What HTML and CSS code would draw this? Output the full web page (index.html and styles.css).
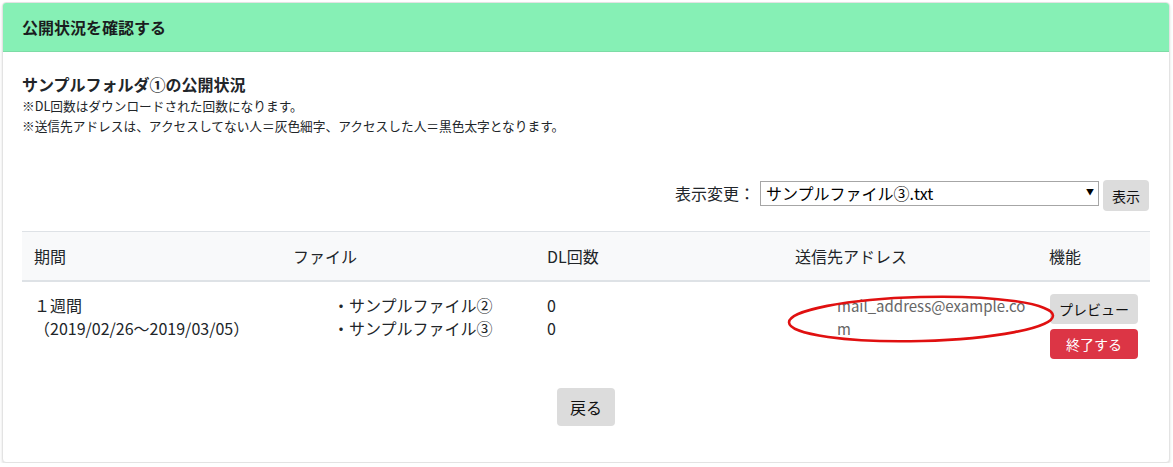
FILE: index.html
```html
<!DOCTYPE html>
<html lang="ja">
<head>
<meta charset="utf-8">
<title>公開状況を確認する</title>
<link rel="stylesheet" href="styles.css">
</head>
<body>
<div class="card">
  <div class="card-header">公開状況を確認する</div>
  <div class="card-body">
    <h2 class="folder-title">サンプルフォルダ①の公開状況</h2>
    <p class="note">※DL回数はダウンロードされた回数になります。</p>
    <p class="note">※送信先アドレスは、アクセスしてない人＝灰色細字、アクセスした人＝黒色太字となります。</p>

    <div class="filter-row">
      <span class="filter-label">表示変更：</span>
      <div class="select-wrap">
        <select class="file-select">
          <option>サンプルファイル③.txt</option>
        </select>
        <span class="select-arrow">▼</span>
      </div>
      <button class="btn btn-gray btn-sm">表示</button>
    </div>

    <table class="status-table">
      <colgroup>
        <col class="c1"><col class="c2"><col class="c3"><col class="c4"><col class="c5">
      </colgroup>
      <thead>
        <tr><th>期間</th><th>ファイル</th><th>DL回数</th><th>送信先アドレス</th><th>機能</th></tr>
      </thead>
      <tbody>
        <tr>
          <td>１週間<br>（2019/02/26〜2019/03/05）</td>
          <td>
            <ul class="file-list">
              <li>・サンプルファイル②</li>
              <li>・サンプルファイル③</li>
            </ul>
          </td>
          <td>0<br>0</td>
          <td class="addr-cell">
            <ul class="addr-list">
              <li class="addr">mail_address@example.com</li>
            </ul>
            <svg class="circle-mark" width="272" height="52" viewBox="0 0 272 52">
              <ellipse cx="136" cy="25" rx="132" ry="22" fill="none" stroke="#e01010" stroke-width="2.6" transform="rotate(-1.5 136 25)"/>
            </svg>
          </td>
          <td>
            <div class="actions">
              <button class="btn btn-gray btn-sm">プレビュー</button>
              <button class="btn btn-red btn-sm">終了する</button>
            </div>
          </td>
        </tr>
      </tbody>
    </table>

    <div class="back-row">
      <button class="btn btn-gray btn-back">戻る</button>
    </div>
  </div>
</div>
</body>
</html>
```

FILE: styles.css
```css
html, body {
  margin: 0;
  padding: 0;
  background: #fff;
}
body {
  padding: 2px 4px 0 2px;
  font-family: "Noto Sans CJK JP", "Noto Sans", sans-serif;
  color: #212529;
  font-size: 16px;
}
.card {
  width: 1166px;
  border: 1px solid #e3e3e3;
  border-radius: 4px;
  box-shadow: 0 2px 3px rgba(0,0,0,0.12);
  overflow: visible;
  background: #fff;
}
.card-header {
  background: #86f0b5;
  border-bottom: 1px solid #7ddca6;
  border-radius: 3px 3px 0 0;
  padding: 12px 19px;
  font-weight: bold;
  font-size: 16px;
  line-height: 24px;
  color: #1a1d20;
}
.card-body {
  padding: 20px 19px 36px 19px;
}
.folder-title {
  margin: 0;
  font-size: 16px;
  font-weight: bold;
  line-height: 24px;
}
.note {
  margin: 0;
  font-size: 12.7px;
  line-height: 20px;
}
.filter-row {
  display: flex;
  justify-content: flex-end;
  align-items: flex-start;
  margin-top: 44px;
  margin-right: 1px;
}
.filter-label {
  font-size: 16px;
  line-height: 25px;
  margin-top: 1px;
  margin-right: 5px;
}
.select-wrap {
  position: relative;
  margin-top: 1px;
  margin-right: 4px;
}
.file-select {
  -webkit-appearance: none;
  appearance: none;
  width: 339px;
  height: 25px;
  border: 1px solid #a6a6a6;
  border-radius: 0;
  background: #fff;
  font-family: inherit;
  font-size: 16px;
  line-height: 23px;
  padding: 0 20px 0 5px;
  color: #000;
  display: block;
}
.select-arrow {
  position: absolute;
  right: 5px;
  top: 4px;
  font-size: 8px;
  line-height: 14px;
  color: #000;
  pointer-events: none;
}
.btn {
  border: none;
  border-radius: 4px;
  font-family: inherit;
  cursor: pointer;
  padding: 0;
}
.btn-gray {
  background: #dcdcdc;
  color: #111;
}
.btn-red {
  background: #dc3545;
  color: #fff;
}
.btn-sm {
  font-size: 14px;
  height: 30px;
  line-height: 30px;
  padding: 0 9px;
}
.filter-row .btn-sm {
  height: 31px;
  width: 46px;
  padding: 0;
}
.status-table {
  margin-top: 20px;
  width: 1128px;
  border-collapse: collapse;
  table-layout: fixed;
}
.c1 { width: 259px; }
.c2 { width: 254px; }
.c3 { width: 248px; }
.c4 { width: 254px; }
.c5 { width: 113px; }
.status-table th {
  background: #f8f9fa;
  border-top: 1px solid #dee2e6;
  border-bottom: 2px solid #dee2e6;
  text-align: left;
  font-weight: normal;
  padding: 12px 12px;
  line-height: 24px;
  font-size: 16px;
}
.status-table td {
  vertical-align: top;
  padding: 12px 12px;
  line-height: 23px;
  font-size: 16px;
}
.file-list, .addr-list {
  list-style: none;
  margin: 0;
  padding-left: 40px;
}
.addr-cell {
  position: relative;
}
.addr-list {
  padding-left: 42px;
  width: 198px;
}
.addr {
  color: #666;
  font-size: 15px;
  word-break: break-all;
}
.circle-mark {
  position: absolute;
  left: 2px;
  top: 12px;
  overflow: visible;
}
.actions {
  display: flex;
  flex-direction: column;
  align-items: flex-start;
  gap: 5px;
  margin-left: 1px;
}
.actions .btn {
  width: 88px;
  padding: 0;
}
.back-row {
  display: flex;
  justify-content: center;
  margin-top: 17px;
}
.btn-back {
  font-size: 16px;
  height: 38px;
  width: 58px;
  line-height: 38px;
}
```
